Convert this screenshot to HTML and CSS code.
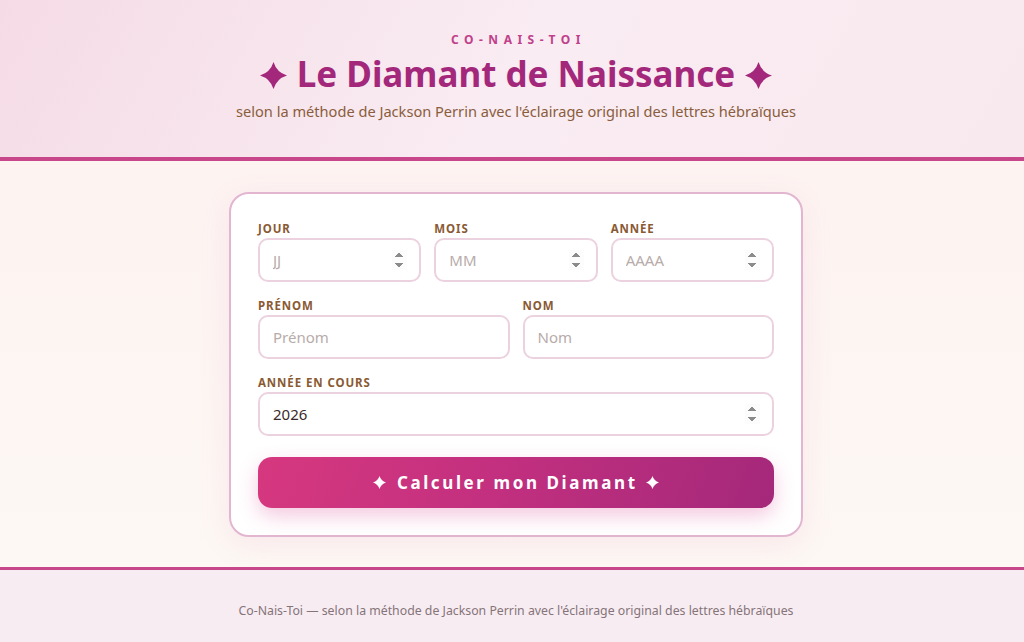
FILE: index.html
```html
<!DOCTYPE html>
<html lang="fr">
<head>
<meta charset="utf-8">
<title>Le Diamant de Naissance</title>
<link rel="stylesheet" href="styles.css">
</head>
<body>
<svg class="defs" width="0" height="0" aria-hidden="true">
  <symbol id="spark" viewBox="0 0 24 24">
    <path d="M12 0 Q14.8 9.2 24 12 Q14.8 14.8 12 24 Q9.2 14.8 0 12 Q9.2 9.2 12 0 Z" fill="currentColor"/>
  </symbol>
</svg>
<header class="site-header">
  <div class="brand">CO-NAIS-TOI</div>
  <h1 class="title">
    <svg class="star"><use href="#spark"/></svg>
    <span>Le Diamant de Naissance</span>
    <svg class="star"><use href="#spark"/></svg>
  </h1>
  <p class="subtitle">selon la méthode de Jackson Perrin avec l'éclairage original des lettres hébraïques</p>
</header>
<main class="main">
  <form class="card">
    <div class="row row-3">
      <label class="field"><span class="label">Jour</span><input type="number" placeholder="JJ"></label>
      <label class="field"><span class="label">Mois</span><input type="number" placeholder="MM"></label>
      <label class="field"><span class="label">Année</span><input type="number" placeholder="AAAA"></label>
    </div>
    <div class="row row-2">
      <label class="field"><span class="label">Prénom</span><input type="text" placeholder="Prénom"></label>
      <label class="field"><span class="label">Nom</span><input type="text" placeholder="Nom"></label>
    </div>
    <div class="row">
      <label class="field"><span class="label">Année en cours</span><input type="number" value="2026"></label>
    </div>
    <button type="button" class="btn">
      <svg class="btn-star"><use href="#spark"/></svg>
      <span class="btn-text">Calculer mon Diamant</span>
      <svg class="btn-star"><use href="#spark"/></svg>
    </button>
  </form>
</main>
<footer class="site-footer">
  Co-Nais-Toi — selon la méthode de Jackson Perrin avec l'éclairage original des lettres hébraïques
</footer>
</body>
</html>
```

FILE: styles.css
```css
* { box-sizing: border-box; }
html, body { margin: 0; padding: 0; }
body {
  font-family: "Noto Sans", "DejaVu Sans", sans-serif;
  background: #fdf6f2;
  height: 642px;
  display: flex;
  flex-direction: column;
}
.defs { position: absolute; width: 0; height: 0; overflow: hidden; }
.site-header {
  background: linear-gradient(120deg, #f5dbe5 0%, #f9ecf2 50%, #f8e9ee 100%);
  border-bottom: 4px solid #c8468a;
  text-align: center;
  padding: 32px 12px 0 20px;
  height: 161px;
}
.brand {
  font-size: 12px;
  font-weight: 700;
  letter-spacing: 5.5px;
  color: #c0408a;
  line-height: 16px;
  padding-left: 5px;
}
.title {
  margin: 6px 0 0;
  font-size: 35px;
  line-height: 40px;
  font-weight: 700;
  color: #a3287b;
  display: flex;
  justify-content: center;
  align-items: center;
  gap: 10px;
}
.star { width: 27px; height: 27px; color: #a3287b; margin-top: 2px; }
.subtitle {
  margin: 8px 0 0;
  font-size: 14.6px;
  line-height: 18px;
  color: #8a5d3c;
}
.main {
  flex: 1;
  background: linear-gradient(180deg, #fdf3f1 0%, #fdf8f4 100%);
  padding: 31px 0 30px 8px;
  display: flex;
  justify-content: center;
}
.card {
  width: 574px;
  background: #fff;
  border: 2px solid #e2b6d0;
  border-radius: 20px;
  padding: 28px 27px 27px;
  box-shadow: 0 8px 30px rgba(214, 120, 170, 0.12);
}
.row {
  display: grid;
  grid-template-columns: 1fr;
  gap: 13px;
  margin-bottom: 17px;
}
.row-3 { grid-template-columns: repeat(3, 1fr); }
.row-2 { grid-template-columns: repeat(2, 1fr); }
.field { display: flex; flex-direction: column; }
.label {
  font-size: 11.5px;
  line-height: 14px;
  font-weight: 700;
  letter-spacing: 0.9px;
  text-transform: uppercase;
  color: #8a5a33;
  margin-bottom: 2px;
}
.field input {
  height: 44px;
  border: 2px solid #ecd2df;
  border-radius: 10px;
  padding: 0 12px 0 13px;
  font-family: "Noto Sans", "DejaVu Sans", sans-serif;
  font-size: 15px;
  color: #3a2a2a;
  background: #fff;
  outline: none;
  width: 100%;
}
.field input::placeholder { color: #b8acaa; }
.field input::-webkit-inner-spin-button { opacity: 1; }
.btn {
  display: flex;
  align-items: center;
  justify-content: center;
  gap: 11px;
  width: 100%;
  height: 51px;
  margin-top: 21px;
  border: none;
  border-radius: 14px;
  background: linear-gradient(110deg, #d6387f 0%, #c3307f 45%, #a4287a 100%);
  color: #fff;
  font-family: "Noto Sans", "DejaVu Sans", sans-serif;
  font-size: 17px;
  font-weight: 700;
  letter-spacing: 2.6px;
  box-shadow: 0 8px 20px rgba(214, 60, 140, 0.28);
  cursor: pointer;
}
.btn-text { margin-right: -2.6px; }
.btn-star { width: 13px; height: 13px; color: #fff; }
.site-footer {
  border-top: 3px solid #c8468a;
  background: #f8ecf3;
  text-align: center;
  font-size: 12.3px;
  color: #857478;
  height: 75px;
  line-height: 75px;
  padding: 3px 0 0 8px;
}
```
